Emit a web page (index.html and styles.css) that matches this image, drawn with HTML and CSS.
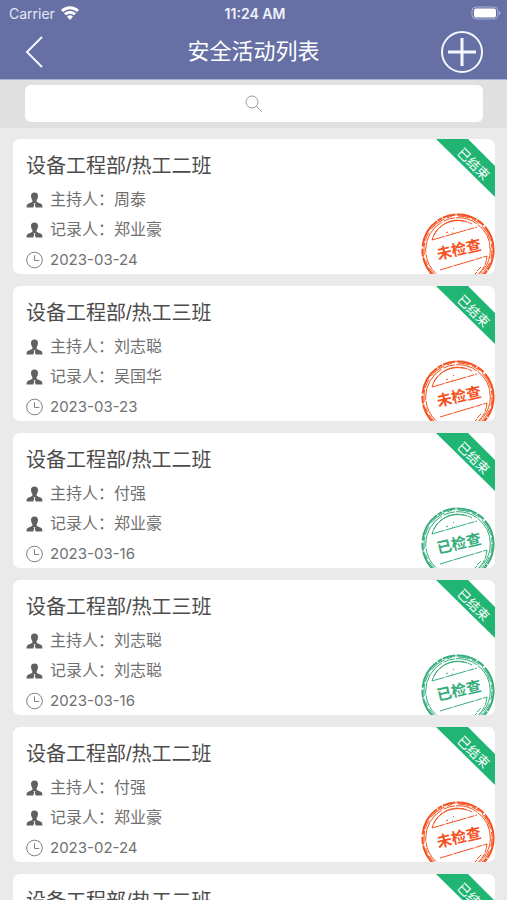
FILE: index.html
```html
<!DOCTYPE html>
<html lang="zh-CN">
<head>
    <meta charset="UTF-8">
    <meta name="viewport" content="width=device-width, initial-scale=1.0">
    <title>安全活动列表</title>
    <link rel="stylesheet" href="styles.css">
</head>
<body>

    <!-- 图标 -->
    <svg class="sprite" aria-hidden="true">
        <symbol id="person" viewBox="0 0 16 16">
            <path d="M8 .5C5.600.5 4.300 2 4.500 4.300c.1 1.600.6 2.900 1.400 3.900v1.600c-.8.900-3.800 1.300-5 2.500-.6.600-.8 1.700-.9 3.200h6.800l.9-3-.9-1.300h2.400l-.9 1.300.9 3H16c-.1-1.500-.3-2.600-.9-3.200-1.200-1.200-4.200-1.600-5-2.500V8.200c.8-1 1.300-2.300 1.400-3.900C11.700 2 10.400.5 8 .5z"/>
        </symbol>
        <symbol id="clock" viewBox="0 0 18 18">
            <circle cx="9" cy="9" r="8.300"/>
            <path d="M9 4v5.500h5"/>
        </symbol>
        <symbol id="ring" viewBox="0 0 74 74">
            <circle cx="37" cy="37" r="35.600" stroke-width="2" stroke-dasharray="21 1 8 2 30 1 5 1 13 1"/>
            <circle cx="37" cy="37" r="34" stroke-width="1" stroke-dasharray="9 4 17 3 5 6 12 2"/>
            <circle cx="37" cy="37" r="32.300" stroke-width="1" stroke-dasharray="22 1 37 2 12 1"/>
            <path stroke-width="1" stroke-dasharray="13 1 22 1 7 1" d="M11 27C15 12 33 1 51 11M11 27l45-13M19 57l47-14c-1 14-12 25-27 25M13 22C19 10 33 5 46 9"/>
            <path stroke-width="1" d="M25 20l2-1M32 16l1-1M31 20h1M56 58l4-4M53 62l3-3"/>
        </symbol>
    </svg>

    <header class="header">
        <div class="status-bar">
            <div class="carrier">
                <span>Carrier</span>
                <svg class="wifi" viewBox="0 0 18 14">
                    <path d="M1 5a11.500 11.500 0 0 1 16 0M4 8.300a7 7 0 0 1 10 0"/>
                    <path class="wifi-dot" d="M6 10.600a4.500 4.500 0 0 1 6 0L9 14z"/>
                </svg>
            </div>
            <span class="time">11:24 AM</span>
            <svg class="battery" viewBox="0 0 30 14">
                <rect class="battery-case" x="1" y="1" width="26" height="12" rx="4"/>
                <rect x="3" y="2.500" width="22" height="9" rx="2"/>
                <path class="battery-tip" d="M28 5c2 1 2 3 0 4z"/>
            </svg>
        </div>
        <div class="nav-bar">
            <button class="nav-button" aria-label="返回">
                <svg class="back-icon" viewBox="0 0 18 32"><path d="M17 1L2 16l15 15"/></svg>
            </button>
            <h1>安全活动列表</h1>
            <button class="nav-button" aria-label="新增">
                <svg class="add-icon" viewBox="0 0 42 42">
                    <circle cx="21" cy="21" r="20"/>
                    <path d="M21 7v28M7 21h28"/>
                </svg>
            </button>
        </div>
    </header>

    <form class="search">
        <input type="search" class="search-input" aria-label="搜索">
        <svg class="search-icon" viewBox="0 0 18 18"><circle cx="7" cy="7" r="6"/><path d="M11.500 11.500l5.500 5.500"/></svg>
    </form>

    <main class="list">
        <article class="card">
            <h2>设备工程部/热工二班</h2>
            <p><svg class="icon"><use href="#person"/></svg>主持人：周泰</p>
            <p><svg class="icon"><use href="#person"/></svg>记录人：郑业豪</p>
            <p class="date"><svg class="icon icon-clock"><use href="#clock"/></svg>2023-03-24</p>
            <svg class="ribbon" viewBox="0 0 59 59"><path d="M0 0h32l27 27v31z"/><text x="38" y="29" transform="rotate(45 37 24)">已结束</text></svg>
            <svg class="stamp unchecked" viewBox="0 0 74 74"><use href="#ring"/><text x="38" y="42" transform="rotate(-13 37 37)">未检查</text></svg>
        </article>

        <article class="card">
            <h2>设备工程部/热工三班</h2>
            <p><svg class="icon"><use href="#person"/></svg>主持人：刘志聪</p>
            <p><svg class="icon"><use href="#person"/></svg>记录人：吴国华</p>
            <p class="date"><svg class="icon icon-clock"><use href="#clock"/></svg>2023-03-23</p>
            <svg class="ribbon" viewBox="0 0 59 59"><path d="M0 0h32l27 27v31z"/><text x="38" y="29" transform="rotate(45 37 24)">已结束</text></svg>
            <svg class="stamp unchecked" viewBox="0 0 74 74"><use href="#ring"/><text x="38" y="42" transform="rotate(-13 37 37)">未检查</text></svg>
        </article>

        <article class="card">
            <h2>设备工程部/热工二班</h2>
            <p><svg class="icon"><use href="#person"/></svg>主持人：付强</p>
            <p><svg class="icon"><use href="#person"/></svg>记录人：郑业豪</p>
            <p class="date"><svg class="icon icon-clock"><use href="#clock"/></svg>2023-03-16</p>
            <svg class="ribbon" viewBox="0 0 59 59"><path d="M0 0h32l27 27v31z"/><text x="38" y="29" transform="rotate(45 37 24)">已结束</text></svg>
            <svg class="stamp checked" viewBox="0 0 74 74"><use href="#ring"/><text x="38" y="42" transform="rotate(-13 37 37)">已检查</text></svg>
        </article>

        <article class="card">
            <h2>设备工程部/热工三班</h2>
            <p><svg class="icon"><use href="#person"/></svg>主持人：刘志聪</p>
            <p><svg class="icon"><use href="#person"/></svg>记录人：刘志聪</p>
            <p class="date"><svg class="icon icon-clock"><use href="#clock"/></svg>2023-03-16</p>
            <svg class="ribbon" viewBox="0 0 59 59"><path d="M0 0h32l27 27v31z"/><text x="38" y="29" transform="rotate(45 37 24)">已结束</text></svg>
            <svg class="stamp checked" viewBox="0 0 74 74"><use href="#ring"/><text x="38" y="42" transform="rotate(-13 37 37)">已检查</text></svg>
        </article>

        <article class="card">
            <h2>设备工程部/热工二班</h2>
            <p><svg class="icon"><use href="#person"/></svg>主持人：付强</p>
            <p><svg class="icon"><use href="#person"/></svg>记录人：郑业豪</p>
            <p class="date"><svg class="icon icon-clock"><use href="#clock"/></svg>2023-02-24</p>
            <svg class="ribbon" viewBox="0 0 59 59"><path d="M0 0h32l27 27v31z"/><text x="38" y="29" transform="rotate(45 37 24)">已结束</text></svg>
            <svg class="stamp unchecked" viewBox="0 0 74 74"><use href="#ring"/><text x="38" y="42" transform="rotate(-13 37 37)">未检查</text></svg>
        </article>

        <article class="card">
            <h2>设备工程部/热工二班</h2>
            <svg class="ribbon" viewBox="0 0 59 59"><path d="M0 0h32l27 27v31z"/><text x="38" y="29" transform="rotate(45 37 24)">已结束</text></svg>
        </article>
    </main>

</body>
</html>
```
FILE: styles.css
```css
* {
    margin: 0;
    padding: 0;
    box-sizing: border-box;
}

body {
    font-family: "Liberation Sans", "Noto Sans CJK SC", sans-serif;
    background-color: #eaeaea;
    color: #707070;
    height: 100vh;
    display: flex;
    flex-direction: column;
    overflow: hidden;
}

.sprite {
    display: none;
}

/* 顶部 */
.header {
    flex: none;
    background-color: #6670a4;
    border-bottom: 1px solid #a3b4d8;
    color: #fff;
}

.status-bar {
    display: grid;
    grid-template-columns: 1fr auto 1fr;
    align-items: center;
    height: 26px;
    padding: 0 6px 0 9px;
    font-family: Inter, sans-serif;
    font-size: 14px;
}

.carrier {
    display: flex;
    align-items: center;
    gap: 6px;
    color: #e4e8f6;
}

.time {
    font-weight: 600;
    color: #f0f2fb;
}

.wifi {
    width: 18px;
    height: 14px;
    fill: none;
    stroke: #fff;
    stroke-width: 3;
}

.wifi .wifi-dot {
    fill: #fff;
    stroke: none;
}

.battery {
    justify-self: end;
    width: 30px;
    height: 14px;
    fill: #fff;
}

.battery .battery-case {
    fill: none;
    stroke: #a9b0d4;
}

.battery .battery-tip {
    fill: #a9b0d4;
}

.nav-bar {
    display: flex;
    align-items: center;
    justify-content: space-between;
    height: 53px;
    padding: 0 24px 2px;
}

.nav-bar h1 {
    font-size: 22px;
    font-weight: 400;
    line-height: 28px;
}

.nav-button {
    display: flex;
    width: 42px;
    background: none;
    border: none;
    cursor: pointer;
}

.nav-button svg {
    fill: none;
    stroke: #f4f7ff;
    stroke-width: 2;
}

.back-icon {
    width: 20px;
    height: 32px;
}

.add-icon {
    width: 42px;
    height: 42px;
}

.nav-button .add-icon path {
    stroke-width: 3;
}

/* 搜索 */
.search {
    flex: none;
    position: relative;
    padding: 5px 24px 6px 25px;
    background-color: #e0e0e0;
}

.search-input {
    display: block;
    width: 100%;
    height: 37px;
    padding: 0 12px;
    background-color: #fff;
    border: none;
    border-radius: 6px;
    font-size: 16px;
    text-align: center;
}

.search-icon {
    position: absolute;
    top: 50%;
    left: 50%;
    width: 18px;
    height: 18px;
    transform: translate(-50%, -50%);
    fill: none;
    stroke: #999;
}

/* 列表 */
.list {
    flex: 1;
    min-height: 0;
    overflow: auto;
    scrollbar-width: none;
    display: flex;
    flex-direction: column;
    gap: 12px;
    padding: 11px 12px 12px 13px;
}

.card {
    flex: none;
    position: relative;
    min-height: 135px;
    padding: 12px 13px 0;
    background-color: #fff;
    border-radius: 7px;
    overflow: hidden;
}

.card h2 {
    margin-bottom: 4px;
    color: #4c4c4c;
    font-size: 20px;
    font-weight: 400;
    line-height: 30px;
}

.card p {
    display: flex;
    align-items: center;
    gap: 7px;
    font-size: 16px;
    line-height: 30px;
}

.card .date {
    height: 29px;
    font-family: Inter, sans-serif;
    font-size: 15px;
}

.icon {
    width: 17px;
    height: 16px;
    fill: #606060;
}

.icon-clock {
    height: 18px;
    fill: none;
    stroke: #777;
}

.ribbon {
    position: absolute;
    top: 0;
    right: 0;
    width: 59px;
    height: 59px;
    fill: #20b573;
}

.ribbon text {
    fill: #fff;
    font-size: 13px;
    text-anchor: middle;
}

.stamp {
    position: absolute;
    right: 0;
    bottom: -13px;
    width: 74px;
    height: 74px;
    fill: none;
    stroke: currentColor;
}

.stamp text {
    fill: currentColor;
    stroke: none;
    font-size: 15px;
    font-weight: 700;
    text-anchor: middle;
}

.unchecked {
    color: #f4511e;
}

.checked {
    color: #35ad7b;
}
```
